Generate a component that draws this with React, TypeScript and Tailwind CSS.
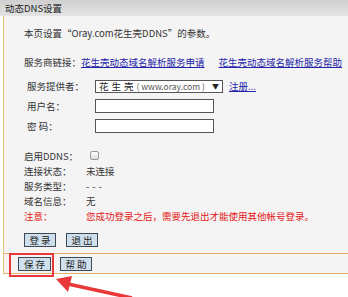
export default function App() {
  const font = { fontFamily: '"Noto Sans CJK SC", "Liberation Sans", sans-serif' }
  const btn = "h-[14px] border border-[#3d4a55] bg-[#cfdfec] tracking-[2px] pl-[2px] text-[#222] leading-[12px]"
  return (
    <div className="relative w-[348px] h-[297px] overflow-hidden bg-white text-[9.5px] leading-[12px] text-[#333] whitespace-nowrap" style={font}>
      <div className="h-[16px] flex items-center px-[5px] bg-gradient-to-b from-[#d0d0d0] to-[#e4e4e4] text-[#222]">
        动态DNS设置
      </div>

      <div className="ml-[3px] border-l border-[#e6c27a] bg-[#f4f4f4]">
        <div className="h-[237px] pl-[20px] pt-[11px] flex flex-col">
          <p>本页设置“Oray.com花生壳DDNS”的参数。</p>

          <p className="mt-[17px] flex">
            <span>服务商链接：</span>
            <a className="text-[#2323a8] underline">花生壳动态域名解析服务申请</a>
            <a className="ml-[14px] text-[#2323a8] underline">花生壳动态域名解析服务帮助</a>
          </p>

          <div className="mt-[8px] flex flex-col">
            <div className="h-[20px] flex items-center">
              <span className="w-[71px] pl-[3px]">服务提供者：</span>
              <div className="h-[13px] w-[128px] border border-[#555] bg-white flex items-center px-[3px] text-[#222]">
                <span className="tracking-[3px]">花生壳</span>
                <span className="text-[8.5px] text-[#555]">( www.oray.com )</span>
                <span className="ml-auto text-[7px]">▼</span>
              </div>
              <a className="ml-[6px] text-[#2323a8] underline">注册...</a>
            </div>
            <div className="h-[20px] flex items-center">
              <span className="w-[71px] pl-[3px]">用户名：</span>
              <div className="h-[14px] w-[119px] border border-[#555] bg-white" />
            </div>
            <div className="h-[20px] flex items-center">
              <span className="w-[71px] pl-[3px]">密 码：</span>
              <div className="h-[14px] w-[119px] border border-[#555] bg-white" />
            </div>
          </div>

          <div className="mt-[12px] flex flex-col">
            <div className="h-[15px] flex items-center">
              <span className="w-[62px]">启用DDNS：</span>
              <span className="ml-[4px] w-[9px] h-[9px] rounded-[2px] border border-[#9a9a9a] bg-gradient-to-b from-white to-[#dcdcdc]" />
            </div>
            <div className="h-[15px] flex items-center">
              <span className="w-[62px]">连接状态：</span>
              <span>未连接</span>
            </div>
            <div className="h-[15px] flex items-center">
              <span className="w-[62px]">服务类型：</span>
              <span className="tracking-[3px]">---</span>
            </div>
            <div className="h-[15px] flex items-center">
              <span className="w-[62px]">域名信息：</span>
              <span>无</span>
            </div>
            <div className="h-[15px] flex items-center text-[#e51515]">
              <span className="w-[62px]">注意：</span>
              <span>您成功登录之后，需要先退出才能使用其他帐号登录。</span>
            </div>
          </div>

          <div className="mt-[10px] flex gap-[10px]">
            <button className={`w-[32px] ${btn}`}>登录</button>
            <button className={`w-[32px] ${btn}`}>退出</button>
          </div>
        </div>

        <div className="h-[21px] border-t border-b border-[#e8ac6c] flex items-center pl-[14px] gap-[9px]">
          <button className={`w-[33px] ${btn}`}>保存</button>
          <button className={`w-[32px] ${btn}`}>帮助</button>
        </div>
      </div>

      <div className="absolute left-[9px] top-[253px] w-[45px] h-[24px] border-2 border-[#e8383a]" />

      <svg className="absolute left-0 top-0" width="348" height="297" viewBox="0 0 348 297">
        <line x1="132" y1="298" x2="68" y2="284" stroke="#e8383a" strokeWidth="3.5" />
        <polygon points="56,279 72,276 68,292" fill="#e8383a" />
      </svg>
    </div>
  )
}
